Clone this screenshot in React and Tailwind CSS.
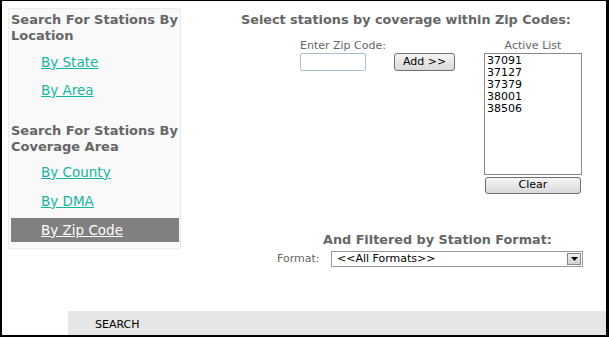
import React from 'react';

const font = { fontFamily: '"DejaVu Sans", Verdana, sans-serif' };

const zips = ['37091', '37127', '37379', '38001', '38506'];

const SideLink = ({ children, active }) => (
  <div
    className={`h-[24px] flex items-center pl-[30px] text-[13.5px] underline ${
      active ? 'bg-[#808080] text-white' : 'text-[#15b5a2]'
    }`}
  >
    {children}
  </div>
);

const Button = ({ children, className }) => (
  <div
    className={`flex items-center justify-center rounded-[3px] border border-[#707070] bg-gradient-to-b from-[#f6f6f6] to-[#d9d9d9] text-[11px] text-black ${className}`}
  >
    {children}
  </div>
);

export default function App() {
  return (
    <div
      className="w-[609px] h-[337px] bg-white border-t border-l-2 border-r-[3px] border-b-2 border-black flex flex-col overflow-hidden"
      style={font}
    >
      <div className="flex">
        {/* Menu lateral */}
        <div className="ml-[6px] mt-[7px] w-[173px] h-[241px] border border-[#ececec] bg-[#f9f9f9] px-[2px] pr-[1px] pt-[3px]">
          <div className="text-[13px] font-bold text-[#666] leading-[16px]">
            Search For Stations By Location
          </div>
          <div className="mt-[6px]">
            <SideLink>By State</SideLink>
            <div className="h-[4px]" />
            <SideLink>By Area</SideLink>
          </div>
          <div className="mt-[21px] text-[13px] font-bold text-[#666] leading-[16px]">
            Search For Stations By Coverage Area
          </div>
          <div className="mt-[5px]">
            <SideLink>By County</SideLink>
            <div className="h-[5px]" />
            <SideLink>By DMA</SideLink>
            <div className="h-[5px]" />
            <SideLink active>By Zip Code</SideLink>
          </div>
        </div>

        {/* Área principal */}
        <div className="flex-1 pt-[11px]">
          <div className="ml-[60px] text-[12.8px] font-bold text-[#666] leading-[16px] whitespace-nowrap">
            Select stations by coverage within Zip Codes:
          </div>
          <div className="flex mt-[11px]">
            <div className="ml-[119px] w-[66px]">
              <div className="text-[11px] text-[#666] leading-[13px] whitespace-nowrap">Enter Zip Code:</div>
              <div className="mt-[1px] h-[18px] w-[66px] rounded-[2px] border border-[#a9bfd6] bg-white" />
            </div>
            <Button className="ml-[28px] mt-[14px] w-[61px] h-[18px]">Add &gt;&gt;</Button>
            <div className="ml-[29px] w-[98px]">
              <div className="text-[11px] text-[#666] leading-[13px] text-center">Active List</div>
              <div className="mt-[1px] h-[122px] border border-[#8a8a8a] bg-white pl-[2px] pt-[1px]">
                {zips.map(z => (
                  <div key={z} className="text-[11px] leading-[12px] text-black">{z}</div>
                ))}
              </div>
              <Button className="mt-[2px] ml-[1px] w-[96px] h-[17px]">Clear</Button>
            </div>
          </div>
          <div className="ml-[142px] mt-[38px] text-[12.8px] font-bold text-[#666] leading-[16px] whitespace-nowrap">
            And Filtered by Station Format:
          </div>
          <div className="flex items-center mt-[3px]">
            <div className="ml-[96px] w-[54px] text-[11px] text-[#666]">Format:</div>
            <div className="h-[16px] w-[252px] border border-[#9a9a9a] bg-white flex items-center">
              <div className="flex-1 pl-[5px] text-[11px] text-black leading-[14px]">&lt;&lt;All Formats&gt;&gt;</div>
              <div className="w-[14px] h-[12px] mr-[1px] border border-[#888] bg-gradient-to-b from-[#f0f0f0] to-[#d0d0d0] flex items-center justify-center">
                <svg width="7" height="4" viewBox="0 0 7 4">
                  <path d="M0 0 L7 0 L3.5 4 Z" fill="#000" />
                </svg>
              </div>
            </div>
          </div>
        </div>
      </div>

      {/* Barra inferior */}
      <div className="mt-auto ml-[66px] h-[24px] bg-[#e6e6e6] flex items-center pl-[27px] pt-[4px] text-[11px] text-black">
        SEARCH
      </div>
    </div>
  );
}
